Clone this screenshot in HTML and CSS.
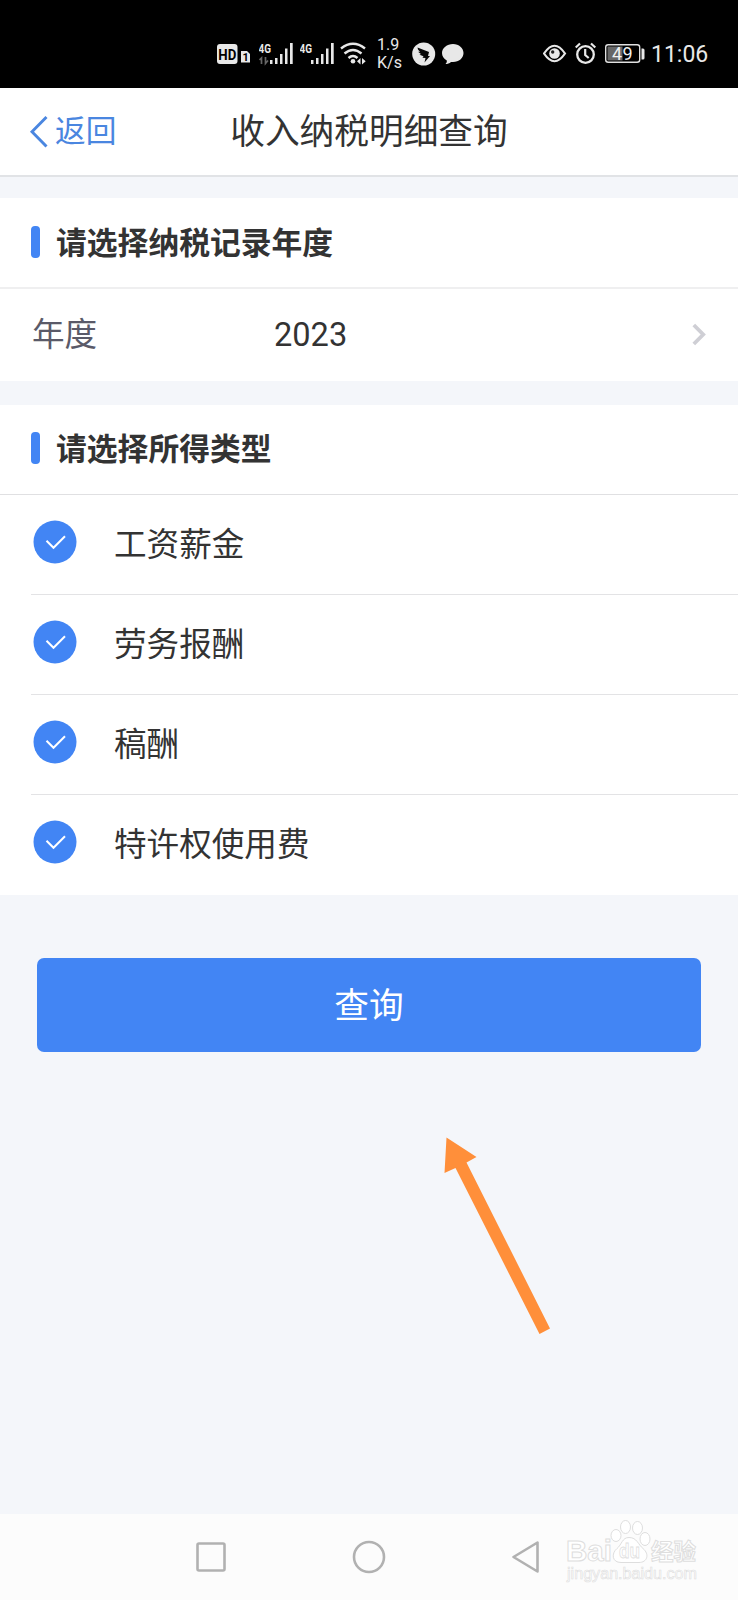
FILE: index.html
```html
<!DOCTYPE html>
<html lang="zh-CN">
<head>
<meta charset="utf-8">
<title>收入纳税明细查询</title>
<link rel="stylesheet" href="styles.css">
</head>
<body>
<div class="screen">
  <div class="status">
    <div class="status-left">
      <svg width="34" height="32" viewBox="217 38 34 32">
        <rect x="217" y="44" width="20.500" height="20" rx="3" fill="#e8e8e8"/>
        <text class="hd" x="218.300" y="59.500" textLength="18" lengthAdjust="spacingAndGlyphs">HD</text>
        <path d="M241 51h6l3 3v8.500h-9z" fill="#e8e8e8"/>
        <text class="sim" x="242.500" y="60.800">1</text>
      </svg>
      <svg class="signal" width="35" height="32" viewBox="259 38 35 32">
        <text class="net" x="258.500" y="52.500" textLength="12.500" lengthAdjust="spacingAndGlyphs">4G</text>
        <path d="M261.500 64v-6l-2 2M265.500 57v6.500l2.500-3" fill="none" stroke="#666" stroke-width="1.700"/>
        <path d="M270 60h2.500v4H270zM275 58h2.500v6H275zM280 54h2.500v10H280zM285 48.500h2.500V64H285zM290 43h2.700v21H290z" fill="#e8e8e8"/>
      </svg>
      <svg class="signal2" width="35" height="32" viewBox="259 38 35 32">
        <text class="net" x="258.500" y="52.500" textLength="12.500" lengthAdjust="spacingAndGlyphs">4G</text>
        <path d="M270 60h2.500v4H270zM275 58h2.500v6H275zM280 54h2.500v10H280zM285 48.500h2.500V64H285zM290 43h2.700v21H290z" fill="#e8e8e8"/>
      </svg>
      <svg class="wifi" width="26" height="32" viewBox="340 38 26 32">
        <path d="M341 48.500q12-9.500 24 0M344.500 53.500q8.500-7 17 0M348.500 58q4.500-4 9 0" fill="none" stroke="#e8e8e8" stroke-width="2.400"/>
        <circle cx="353" cy="61.300" r="2.300" fill="#e8e8e8"/>
        <path d="M360.500 58v6.500l-3.500-3.200zM362 58v6.500l3.700-3.200z" fill="#e8e8e8"/>
      </svg>
      <div class="speed"><span>1.9</span><span>K/s</span></div>
      <svg class="bird" width="24" height="32" viewBox="412 38 24 32">
        <circle cx="423.700" cy="54" r="11.500" fill="#e8e8e8"/>
        <path d="M417.500 47.500l11.500 4.500-1 4h2l-5.500 6.500 1-4.500-3-.3 1-1.500-4-1.500 1.500-.7-3-2.200 2 .2-2-2.500z" fill="#080808"/>
      </svg>
      <svg class="bubble" width="23" height="32" viewBox="442 38 23 32">
        <path d="M453 44c6 0 10.500 4 10.500 9s-4.500 9-10.500 9h-2c-1.500 1.500-3.500 2-5.500 2 1-1 1.500-2 1.300-3.600-3-1.800-4.800-4.400-4.800-7.400 0-5 5-9 11-9z" fill="#e8e8e8"/>
      </svg>
    </div>
    <div class="status-right">
      <svg width="24" height="32" viewBox="543 38 24 32">
        <path d="M544 53.500q10.500-15.500 21 0q-10.500 15.500-21 0z" fill="none" stroke="#e8e8e8" stroke-width="2.200"/>
        <circle cx="554.500" cy="53.500" r="5.300" fill="#e8e8e8"/>
        <circle cx="552.700" cy="52" r="1.700" fill="#222"/>
      </svg>
      <svg width="22" height="32" viewBox="574 38 22 32">
        <circle cx="584.500" cy="54.500" r="8.300" fill="none" stroke="#e8e8e8" stroke-width="2.300"/>
        <path d="M584.200 49v6l3.500 3M574.700 47.500l4.300-4M594.300 47.500l-4.300-4" fill="none" stroke="#e8e8e8" stroke-width="2.200"/>
      </svg>
      <svg width="41" height="32" viewBox="605 38 41 32">
        <rect x="605.700" y="44.700" width="34" height="17.500" rx="2.500" fill="none" stroke="#e0e0e0" stroke-width="1.400"/>
        <rect x="607.500" y="46.500" width="15" height="14" fill="#666"/>
        <path d="M641.500 48.500h1.500q1.500 0 1.500 1.500v8q0 1.500-1.500 1.500h-1.500z" fill="#e8e8e8"/>
        <text class="battery" x="612" y="60" textLength="20.500">49</text>
      </svg>
      <span class="clock">11:06</span>
    </div>
  </div>

  <header class="header">
    <a class="back">
      <svg width="20" height="34" viewBox="0 0 20 34"><path d="M17.500 2L3 16.700 17.500 31.500" fill="none" stroke="#4a86e0" stroke-width="2.900"/></svg>
      <span>返回</span>
    </a>
    <h1 class="title">收入纳税明细查询</h1>
  </header>

  <section class="card">
    <h2 class="card-title">请选择纳税记录年度</h2>
    <div class="year">
      <span class="year-label">年度</span>
      <span class="year-value">2023</span>
      <svg width="15" height="24" viewBox="0 0 15 24"><path d="M1.800 2L11.200 11.500 1.800 21" fill="none" stroke="#cfcfd5" stroke-width="3.800"/></svg>
    </div>
  </section>

  <section class="card card-types">
    <h2 class="card-title">请选择所得类型</h2>
    <ul class="types">
      <li><svg class="check" viewBox="0 0 44 44"><circle cx="22" cy="22" r="21.500"/><path d="M13.500 20.800l7 7 11.500-11.500"/></svg><span>工资薪金</span></li>
      <li><svg class="check" viewBox="0 0 44 44"><circle cx="22" cy="22" r="21.500"/><path d="M13.500 20.800l7 7 11.500-11.500"/></svg><span>劳务报酬</span></li>
      <li><svg class="check" viewBox="0 0 44 44"><circle cx="22" cy="22" r="21.500"/><path d="M13.500 20.800l7 7 11.500-11.500"/></svg><span>稿酬</span></li>
      <li><svg class="check" viewBox="0 0 44 44"><circle cx="22" cy="22" r="21.500"/><path d="M13.500 20.800l7 7 11.500-11.500"/></svg><span>特许权使用费</span></li>
    </ul>
  </section>

  <button class="submit">查询</button>

  <svg class="pointer" width="108" height="198" viewBox="444 1137 108 198">
    <path d="M446.500 1137.500L476.500 1157 466.500 1162.500 550 1328.500 539.500 1334 455.500 1168 444.500 1173z" fill="#ff8f3a"/>
  </svg>

  <nav class="nav">
    <svg width="30" height="34" viewBox="0 0 30 34"><rect x="1.500" y="3.500" width="27" height="27" rx="1.500"/></svg>
    <svg width="34" height="34" viewBox="0 0 34 34"><circle cx="17" cy="17" r="15"/></svg>
    <svg width="28" height="34" viewBox="0 0 28 34"><path d="M25.500 2.500v29L1.500 17z"/></svg>
  </nav>

  <svg class="watermark" width="140" height="72" viewBox="562 1516 140 72">
    <g fill="#fff" stroke="#dedede" stroke-width="1">
      <ellipse cx="616" cy="1535.500" rx="5" ry="6"/>
      <ellipse cx="625.500" cy="1527" rx="5" ry="6.500"/>
      <ellipse cx="637.500" cy="1528" rx="5" ry="6.500"/>
      <ellipse cx="645" cy="1539" rx="5" ry="6.500"/>
      <path d="M629 1537.500c8 0 9 7 14 11 7 6 4 14-4 14h-18c-9 0-10-9-4-14 5-4 5-11 12-11z"/>
      <text class="wm-latin" x="566" y="1561" textLength="46" lengthAdjust="spacingAndGlyphs">Bai</text>
      <text class="wm-du" x="619" y="1558" textLength="21" lengthAdjust="spacingAndGlyphs">du</text>
      <text class="wm-cjk" x="651" y="1560" textLength="45">经验</text>
      <text class="wm-url" x="567" y="1579" textLength="130" lengthAdjust="spacingAndGlyphs">jingyan.baidu.com</text>
    </g>
  </svg>
</div>
</body>
</html>
```
FILE: styles.css
```css
* { box-sizing: border-box; margin: 0; padding: 0; }
body {
  width: 738px;
  background: #f4f6fa;
  color: #333;
  font-family: Roboto, "Noto Sans CJK SC", sans-serif;
}
svg { display: block; flex: none; }
.screen {
  position: relative;
  display: flex;
  flex-direction: column;
  height: 1600px;
  overflow: hidden;
}

.status {
  display: flex;
  justify-content: space-between;
  height: 88px;
  padding: 38px 30px 0 217px;
  background: #000;
  color: #e8e8e8;
}
.status-left, .status-right { display: flex; height: 32px; }
.status-right { gap: 8px; }
.signal { margin-left: 8px; }
.signal2 { margin-left: 6px; }
.wifi { margin-left: 5px; }
.speed {
  display: flex;
  flex-direction: column;
  width: 24px;
  margin-left: 11px;
  font-size: 16px;
  line-height: 18px;
  margin-top: -2px;
}
.bird { margin-left: 11px; }
.bubble { margin-left: 6px; }
.hd { font: 700 15.500px Roboto, sans-serif; fill: #000; }
.sim { font: 700 11px Roboto, sans-serif; fill: #000; }
.net { font: 700 13px Roboto, sans-serif; fill: #e8e8e8; }
.battery { font: 18px Roboto, sans-serif; fill: #f0f0f0; }
.clock { width: 57px; margin-left: -3px; padding-top: 1px; font-size: 23px; line-height: 32px; }

.header {
  display: grid;
  grid-template-columns: 1fr auto 1fr;
  align-items: center;
  height: 89px;
  border-bottom: 2px solid #e1e3e6;
  background: #fff;
}
.back {
  display: flex;
  align-items: center;
  gap: 6px;
  padding-left: 29px;
  color: #4a86e0;
  font-size: 30.700px;
  line-height: 40px;
}
.title { font-size: 34.700px; font-weight: 400; line-height: 44px; }

.card { margin-top: 21px; background: #fff; }
.card-types { margin-top: 24px; }
.card-title {
  display: flex;
  align-items: center;
  gap: 16px;
  height: 91px;
  padding: 2px 0 0 31px;
  border-bottom: 2px solid #efeff0;
  font-size: 30.800px;
  font-weight: 700;
  line-height: 40px;
}
.card-title::before {
  content: "";
  width: 9px;
  height: 32px;
  margin-bottom: 4px;
  border-radius: 4px;
  background: #4285f4;
}
.card-types .card-title { height: 90px; padding-top: 0; border-bottom: 1px solid #e0e0e2; }
.year {
  display: flex;
  align-items: center;
  height: 92px;
  padding: 0 31px 0 32px;
  font-size: 32.600px;
  line-height: 44px;
}
.year-label { width: 242px; color: #5a5a68; }
.year-value { flex: 1; }

.types { padding-left: 31px; list-style: none; }
.types li {
  display: flex;
  align-items: center;
  gap: 37px;
  height: 100px;
  padding-left: 2px;
  border-bottom: 1px solid #e3e3e5;
  font-size: 32.600px;
  line-height: 44px;
}
.types li:last-child { border-bottom: 0; }
.check { width: 44px; height: 44px; margin-bottom: 6px; }
.check circle { fill: #4285f4; }
.check path { fill: none; stroke: #fff; stroke-width: 2; }

.submit {
  height: 94px;
  margin: 63px 37px 0;
  padding-bottom: 5px;
  border: 0;
  border-radius: 7px;
  background: #4285f4;
  color: #fff;
  font: 34.700px/44px "Noto Sans CJK SC", sans-serif;
}

.pointer { position: absolute; left: 444px; top: 1137px; }

.nav {
  display: flex;
  justify-content: space-between;
  height: 86px;
  margin-top: auto;
  padding: 26px 198px 0 196px;
  background: #fcfcfc;
}
.nav svg { fill: none; stroke: #b1b1b1; stroke-width: 2.600; stroke-linejoin: round; }

.watermark { position: absolute; left: 562px; top: 1516px; }
.wm-latin { font: 700 29px "Liberation Sans", sans-serif; }
.wm-du { font: 700 21px "Liberation Sans", sans-serif; stroke-width: .8px; }
.wm-cjk { font: 700 22.500px "Noto Sans CJK SC", sans-serif; }
.wm-url { font: 16px "Liberation Sans", sans-serif; stroke-width: .6px; }
```
